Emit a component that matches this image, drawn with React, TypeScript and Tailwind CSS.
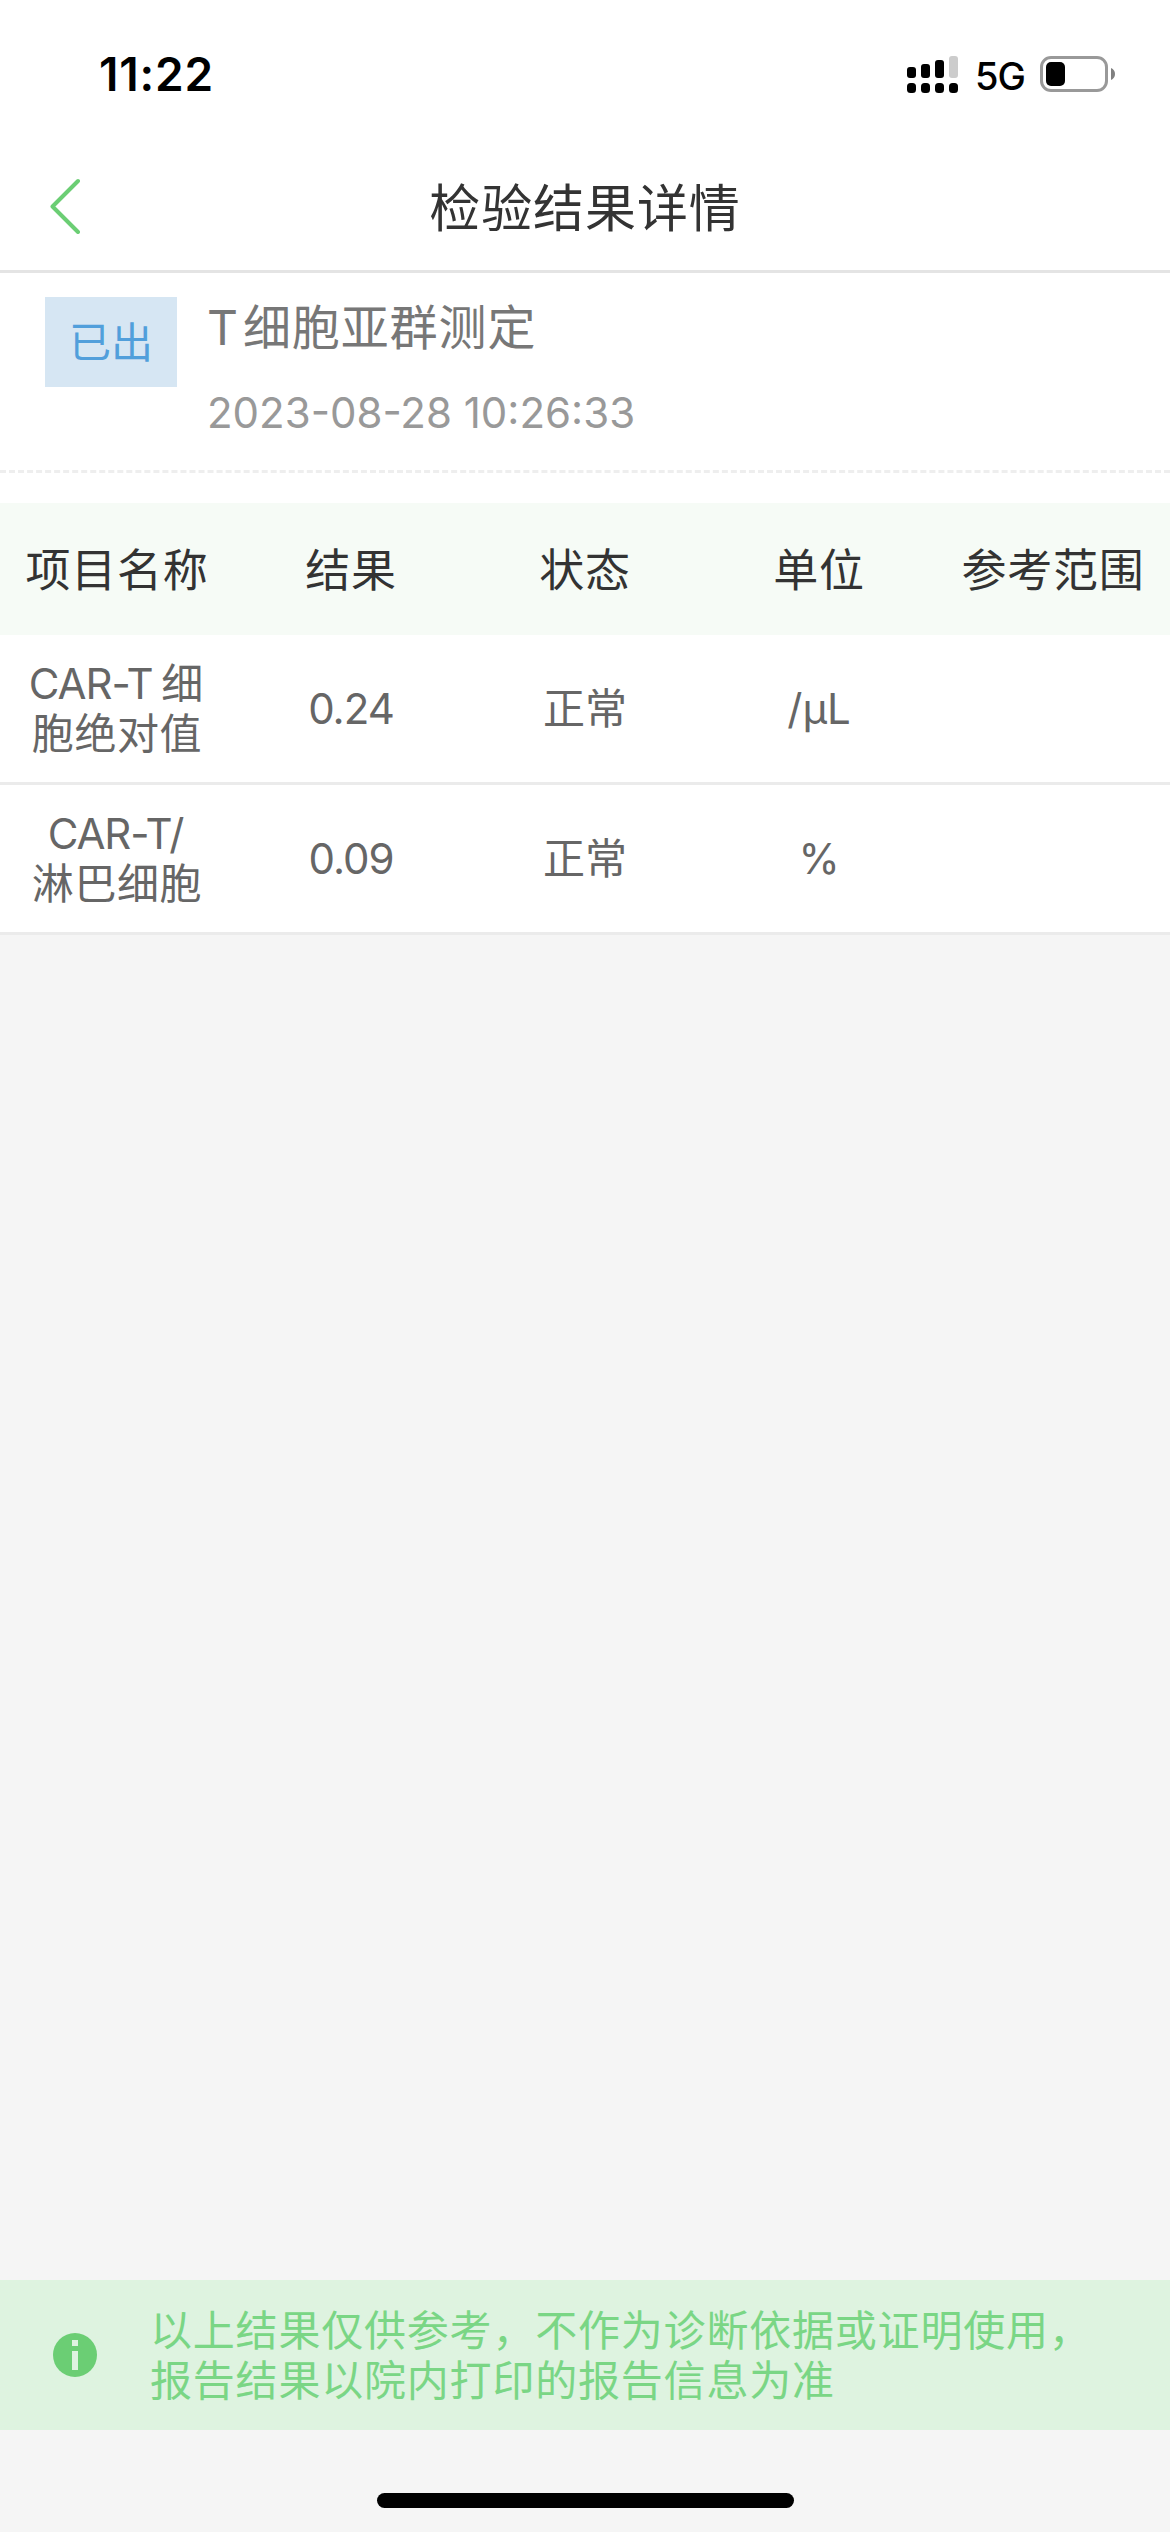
interface ResultRow {
  name: string[];
  value: string;
  status: string;
  unit: string;
  range: string;
}

const columns = ["项目名称", "结果", "状态", "单位", "参考范围"];

const rows: ResultRow[] = [
  { name: ["CAR-T 细", "胞绝对值"], value: "0.24", status: "正常", unit: "/μL", range: "" },
  { name: ["CAR-T/", "淋巴细胞"], value: "0.09", status: "正常", unit: "%", range: "" },
];

function SignalIcon() {
  return (
    <svg width="51" height="37" viewBox="0 0 51 37" className="block">
      <rect x="0" y="11" width="9" height="11" rx="3" />
      <rect x="14" y="8" width="9" height="14" rx="3" />
      <rect x="28" y="4" width="9" height="18" rx="3" />
      <rect x="42" y="0" width="9" height="22" rx="3" fill="#cccccc" />
      {[0, 14, 28, 42].map((x) => (
        <rect key={x} x={x} y="27" width="9" height="10" rx="3.5" />
      ))}
    </svg>
  );
}

function BatteryIcon() {
  return (
    <svg width="75" height="36" viewBox="0 0 75 36" className="block">
      <rect x="1.5" y="1.5" width="65" height="33" rx="9.5" fill="none" stroke="#999999" strokeWidth="3" />
      <rect x="6" y="6" width="19" height="24" rx="5" />
      <path d="M71 12c2.6 1 4 3.400 4 6s-1.400 5-4 6z" fill="#808080" />
    </svg>
  );
}

function StatusBar() {
  return (
    <div className="flex h-[141px] items-start justify-between pr-[55px] pl-[99px]">
      <span className="mt-[46px] text-[46px] leading-[56px] font-semibold tracking-[0.8px] text-black">
        11:22
      </span>
      <div className="mt-[56px] flex items-start">
        <SignalIcon />
        <span className="mt-[-3px] ml-[17px] w-[65px] text-[38px] leading-[46px] font-medium tracking-[-1px] text-black">
          5G
        </span>
        <BatteryIcon />
      </div>
    </div>
  );
}

function NavBar() {
  return (
    <header className="flex h-[132px] items-center border-b-[3px] border-[#e4e4e4]">
      <button type="button" aria-label="返回" className="w-[234px] pt-px pl-[49px]">
        <svg width="32" height="56" viewBox="0 0 32 56" fill="none" className="block">
          <path
            d="M29 3 3.500 28.500 29 54"
            stroke="#6bce74"
            strokeWidth="4"
            strokeLinecap="round"
            strokeLinejoin="round"
          />
        </svg>
      </button>
      <h1 className="flex-1 pt-[7px] text-center text-[51px] leading-[72px] tracking-[0.9px] text-[#333333]">
        检验结果详情
      </h1>
      <div className="w-[234px]" />
    </header>
  );
}

function ReportSummary() {
  return (
    <section className="flex h-[200px] items-start border-b-[3px] border-dashed border-[#eeeeee] pt-6 pl-[45px]">
      <span className="flex h-[90px] w-[132px] items-center justify-center bg-[#d6e6f3] text-[42px] text-[#519fdb]">
        已出
      </span>
      <div className="ml-[30px]">
        <h2 className="pt-px text-[48px] leading-[60px] tracking-[0.9px] text-[#777777]">
          T<span className="ml-1">细胞亚群测定</span>
        </h2>
        <p className="mt-[25px] text-[42px] leading-[60px] text-[#999999]">
          2023-08-28 10:26:33
        </p>
      </div>
    </section>
  );
}

function ResultTable() {
  return (
    <section className="pt-[30px] text-center">
      <div className="grid h-[132px] grid-cols-5 items-center bg-[#f6fbf6] pt-[3px] text-[45px] tracking-[0.8px] text-[#333333]">
        {columns.map((c) => (
          <span key={c}>{c}</span>
        ))}
      </div>
      {rows.map((r) => (
        <div
          key={r.value}
          className="grid h-[150px] grid-cols-5 items-center border-b-[3px] border-[#ebebeb] text-[42px] leading-[50px] text-[#666666]"
        >
          <div>
            {r.name.map((line) => (
              <div
                key={line}
                className={line.startsWith("CAR") ? "pr-[3px] tracking-[-1.100px] [word-spacing:-2px]" : "tracking-[0.6px]"}
              >
                {line}
              </div>
            ))}
          </div>
          <span className="tracking-[-1px]">{r.value}</span>
          <span>{r.status}</span>
          <span>{r.unit}</span>
          <span>{r.range}</span>
        </div>
      ))}
    </section>
  );
}

function Notice() {
  return (
    <div className="flex h-[150px] items-center bg-[#def3e0] pl-[53px]">
      <svg width="44" height="44" viewBox="0 0 44 44" className="block shrink-0">
        <circle cx="22" cy="22" r="22" fill="#6bce74" />
        <path d="M19 7h6v6h-6zM19 18h6v19h-6z" fill="#def3e0" />
      </svg>
      <p className="ml-[53px] pt-[2px] text-[42px] leading-[50px] tracking-[0.8px] text-[#7ad685]">
        以上结果仅供参考，不作为诊断依据或证明使用，
        <br />
        报告结果以院内打印的报告信息为准
      </p>
    </div>
  );
}

export default function App() {
  return (
    <div className="flex h-[2532px] w-[1170px] flex-col overflow-hidden bg-[#f5f5f5] font-['Inter','Noto_Sans_CJK_SC',sans-serif]">
      <div className="bg-white">
        <StatusBar />
        <NavBar />
        <ReportSummary />
        <ResultTable />
      </div>
      <div className="mt-auto">
        <Notice />
        <div className="flex h-[102px] justify-center pt-[63px]">
          <div className="h-[15px] w-[417px] rounded-full bg-black" />
        </div>
      </div>
    </div>
  );
}
